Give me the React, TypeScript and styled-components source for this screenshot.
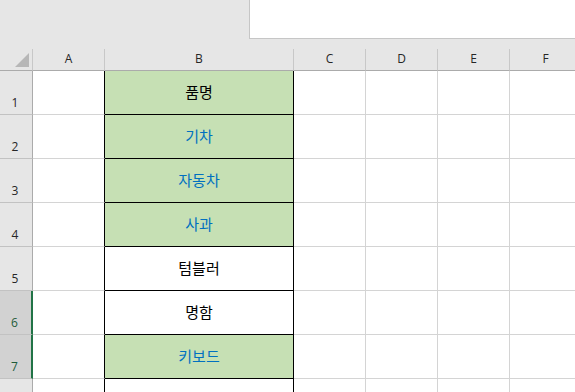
import React from 'react'
import styled, { createGlobalStyle } from 'styled-components'

const GlobalStyle = createGlobalStyle`
    html, body {
        margin: 0;
        padding: 0;
        background: #ffffff;
        overflow: hidden;
    }
    * {
        box-sizing: border-box;
    }
`

const Page = styled.div`
    width: 575px;
    height: 392px;
    overflow: hidden;
    background: #ffffff;
`

const TopBar = styled.div`
    display: flex;
    justify-content: flex-end;
    height: 49px;
    background: #e6e6e6;
`

const FormulaBox = styled.div`
    width: 326px;
    height: 39px;
    background: #ffffff;
    border-left: 1px solid #c6c6c6;
    border-bottom: 1px solid #c6c6c6;
`

const Sheet = styled.div`
    display: grid;
    grid-template-columns: 33px 72px 189px 72px 72px 72px 72px;
    grid-template-rows: 22px repeat(8, 44px);
    width: 582px;
`

const HeaderCell = styled.div`
    position: relative;
    display: flex;
    align-items: center;
    justify-content: center;
    padding-bottom: 3px;
    background: #e6e6e6;
    border-right: 1px solid #c8c8c8;
    border-bottom: 1px solid #ababab;
    font-family: 'Open Sans', 'Noto Sans', sans-serif;
    font-size: 12px;
    color: #262626;
`

const CornerTriangle = styled.div`
    position: absolute;
    right: 3px;
    bottom: 3px;
    width: 0;
    height: 0;
    border-style: solid;
    border-width: 0 0 14px 14px;
    border-color: transparent transparent #b7b7b7 transparent;
`

const RowHeader = styled.div<{ $selected?: boolean }>`
    display: flex;
    align-items: flex-end;
    justify-content: center;
    padding-bottom: 3px;
    padding-right: 2px;
    background: ${(p) => (p.$selected ? '#d2d2d2' : '#e6e6e6')};
    border-right: ${(p) => (p.$selected ? '2px solid #217346' : '1px solid #ababab')};
    border-bottom: 1px solid #c2c2c2;
    font-family: 'Open Sans', 'Noto Sans', sans-serif;
    font-size: 12px;
    color: ${(p) => (p.$selected ? '#1f5c3a' : '#262626')};
`

const Cell = styled.div<{ $fill?: string; $ink?: string; $boxed?: boolean; $edge?: boolean }>`
    display: flex;
    align-items: center;
    justify-content: center;
    padding-bottom: 2px;
    background: ${(p) => p.$fill ?? '#ffffff'};
    border-right: 1px solid ${(p) => (p.$boxed || p.$edge ? '#000000' : '#d4d4d4')};
    border-bottom: 1px solid ${(p) => (p.$boxed ? '#000000' : '#d4d4d4')};
    font-family: 'Noto Sans CJK KR', 'Noto Sans', sans-serif;
    font-size: 15px;
    color: ${(p) => p.$ink ?? '#000000'};
`

const GREEN = '#c6e0b4'
const BLUE = '#0070c0'

const rows = [
    { label: '품명', fill: GREEN, ink: '#000000' },
    { label: '기차', fill: GREEN, ink: BLUE },
    { label: '자동차', fill: GREEN, ink: BLUE },
    { label: '사과', fill: GREEN, ink: BLUE },
    { label: '텀블러', fill: '#ffffff', ink: '#000000' },
    { label: '명함', fill: '#ffffff', ink: '#000000' },
    { label: '키보드', fill: GREEN, ink: BLUE },
    { label: '', fill: '#ffffff', ink: '#000000' },
]

const columns = ['A', 'B', 'C', 'D', 'E', 'F']

const App: React.FC = () => (
    <Page>
        <GlobalStyle />
        <TopBar>
            <FormulaBox />
        </TopBar>
        <Sheet>
            <HeaderCell>
                <CornerTriangle />
            </HeaderCell>
            {columns.map((c) => (
                <HeaderCell key={c}>{c}</HeaderCell>
            ))}
            {rows.map((r, i) => (
                <React.Fragment key={i}>
                    {/* row 8's number sits below the visible area */}
                    <RowHeader $selected={i === 5 || i === 6}>{i < 7 ? i + 1 : null}</RowHeader>
                    <Cell $edge />
                    <Cell $boxed $fill={r.fill} $ink={r.ink}>
                        {r.label}
                    </Cell>
                    <Cell />
                    <Cell />
                    <Cell />
                    <Cell />
                </React.Fragment>
            ))}
        </Sheet>
    </Page>
)

export default App
